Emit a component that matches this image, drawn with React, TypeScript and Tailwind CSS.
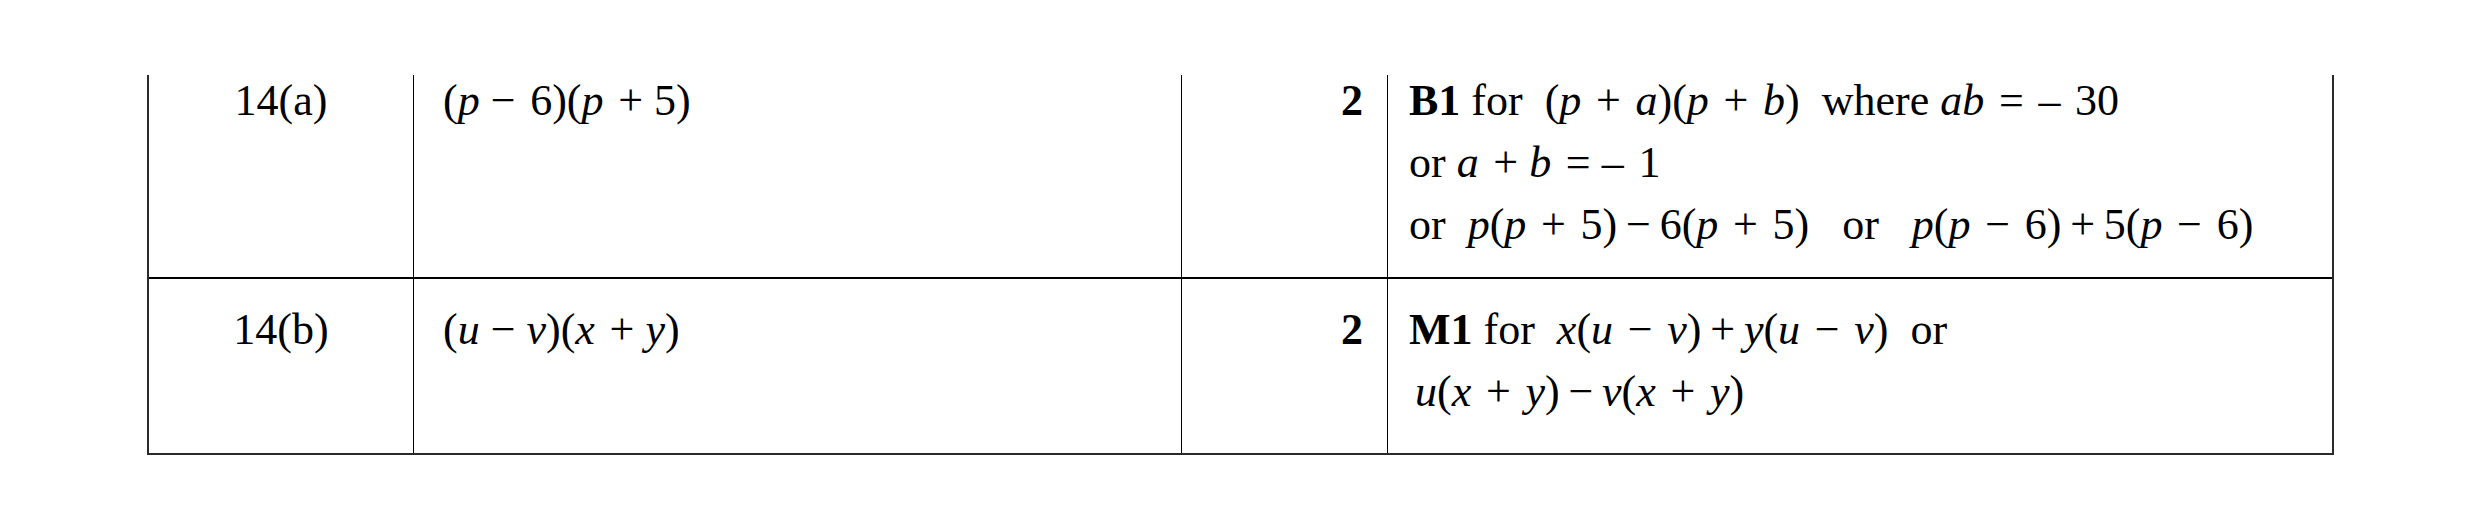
import React from "react";

// italic maths variable
function I({ children }: { children: React.ReactNode }) {
  return <span className="italic">{children}</span>;
}

const MINUS = "\u2212";
const THIN = "\u2009";
const S = "\u2004"; // MathType-ish space around inner operators

export default function App() {
  return (
    <div className="h-[530px] w-[2480px] bg-white pt-[75px] pl-[147px] font-['Liberation_Serif','Times_New_Roman',serif] text-[44px] leading-[62px] text-black">
      <div className="w-[2187px] border-x-2 border-b-2 border-[#2a2a2a]">
        {/* 14(a) */}
        <div className="flex h-[204px] border-b-2 border-black">
          <div className="w-[265px] border-r border-black text-center">
            <div className="-mt-[5px]">14(a)</div>
          </div>
          <div className="w-[768px] border-r border-black pl-[29px] whitespace-pre">
            <div className="-mt-[5px]">
              (<I>p</I>{" "}{MINUS}{S}6)(<I>p</I>{S}+{" "}5)
            </div>
          </div>
          <div className="w-[206px] border-r border-black pr-[24px] text-right font-bold">
            <div className="-mt-[5px]">2</div>
          </div>
          <div className="flex-1 pl-[21px] whitespace-pre">
            <div className="-mt-[5px]">
              <div>
                <b>B1</b> for{"  "}(<I>p</I>{S}+{S}<I>a</I>)(<I>p</I>{S}+{S}<I>b</I>){"  "}where <I>ab</I>{S}={S}–{S}30
              </div>
              <div>
                or <I>a</I>{S}+{" "}<I>b</I>{S}={" "}–{S}1
              </div>
              <div>
                or{"  "}<I>p</I>(<I>p</I>{S}+{S}5){THIN}{MINUS}{THIN}6(<I>p</I>{S}+{S}5){"   "}or{"   "}<I>p</I>(<I>p</I>{S}{MINUS}{S}6){THIN}+{THIN}5(<I>p</I>{S}{MINUS}{S}6)
              </div>
            </div>
          </div>
        </div>

        {/* 14(b) */}
        <div className="flex h-[174px]">
          <div className="w-[265px] border-r border-black pt-[20px] text-center">14(b)</div>
          <div className="w-[768px] border-r border-black pl-[29px] pt-[20px] whitespace-pre">
            (<I>u</I>{" "}{MINUS}{" "}<I>v</I>)(<I>x</I>{S}+{" "}<I>y</I>)
          </div>
          <div className="w-[206px] border-r border-black pr-[24px] pt-[20px] text-right font-bold">2</div>
          <div className="flex-1 pl-[21px] pt-[20px] whitespace-pre">
            <div>
              <b>M1</b> for{"  "}<I>x</I>(<I>u</I>{S}{MINUS}{S}<I>v</I>){THIN}+{THIN}<I>y</I>(<I>u</I>{S}{MINUS}{S}<I>v</I>){"  "}or
            </div>
            <div className="pl-[6px]">
              <I>u</I>(<I>x</I>{S}+{S}<I>y</I>){THIN}{MINUS}{THIN}<I>v</I>(<I>x</I>{S}+{S}<I>y</I>)
            </div>
          </div>
        </div>
      </div>
    </div>
  );
}
